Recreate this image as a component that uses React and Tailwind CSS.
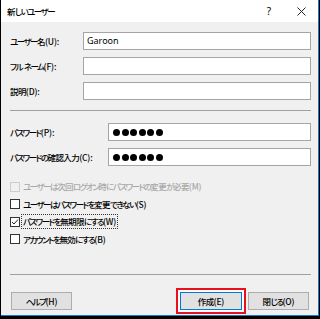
import React from "react";

const font = "font-['Noto_Sans_CJK_JP','Noto_Sans',sans-serif] [font-feature-settings:'palt'] font-medium";

function J({ children }) {
  const parts = String(children)
    .split(/([\x00-\x7f]+|[\u4e00-\u9fff]+)/)
    .filter((p) => p.length);
  return (
    <>
      {parts.map((p, i) => {
        if (/^[\x00-\x7f]+$/.test(p))
          return (
            <span key={i} className="tracking-[-0.15px] whitespace-pre">{p}</span>
          );
        if (/^[\u4e00-\u9fff]+$/.test(p))
          return (
            <span key={i} className="tracking-[-0.6px]">{p}</span>
          );
        return (
          <span key={i} className="tracking-[-1.5px]">{p}</span>
        );
      })}
    </>
  );
}

function Input({ children }) {
  return (
    <div className="h-[18px] flex-1 bg-white border border-[#a5a5a5] flex items-center pl-[3px] text-[9px] text-black font-normal font-['Noto_Sans',sans-serif]">
      {children}
    </div>
  );
}

function Dots() {
  return (
    <div className="flex items-center gap-[1.5px] pl-[1px]">
      {[0, 1, 2, 3, 4, 5].map((i) => (
        <div key={i} className="w-[7px] h-[7px] rounded-full bg-black" />
      ))}
    </div>
  );
}

function Check({ checked, disabled, focus, children }) {
  return (
    <div className="flex items-center h-[17.5px]">
      <div
        className={
          "w-[10px] h-[10px] border flex items-center justify-center " +
          (disabled ? "border-[#cccccc] bg-[#f0f0f0]" : "border-[#333333] bg-white")
        }
      >
        {checked && (
          <svg width="8" height="8" viewBox="0 0 8 8">
            <path d="M1 4 L3 6 L7 1.5" fill="none" stroke="#222" strokeWidth="1" />
          </svg>
        )}
      </div>
      <div
        className={
          "ml-[1px] px-[1px] text-[8.5px] leading-[13px] " +
          (disabled ? "text-[#a8a8a8]" : "text-black") +
          (focus ? " border border-dotted border-[#333]" : " border border-transparent")
        }
      >
        <J>{children}</J>
      </div>
    </div>
  );
}

export default function App() {
  return (
    <div className={"w-[320px] h-[319px] bg-black " + font}>
      <div className="ml-[1px] w-[318px] h-[316px] bg-[#f0f0f0] border-r border-b border-[#1979ca] flex flex-col">
        <div className="h-[22px] bg-white flex items-center pl-[6px] pr-[12px] text-[8.5px] text-black">
          <span><J>新しいユーザー</J></span>
          <span className="ml-auto mr-[26px] text-[10px] font-normal font-['Noto_Sans',sans-serif]">?</span>
          <svg width="9" height="9" viewBox="0 0 9 9">
            <path d="M0.5 0.5 L8.5 8.5 M8.5 0.5 L0.5 8.5" stroke="#222" strokeWidth="1" />
          </svg>
        </div>
        <div className="pl-[9px] pr-[7px] pt-[10px] flex flex-col text-[8.5px] text-black">
          <div className="flex flex-col gap-[7px]">
            <div className="flex items-center">
              <div className="w-[73px]"><J>ユーザー名(U):</J></div>
              <Input>
                <span>Garoon</span>
              </Input>
            </div>
            <div className="flex items-center">
              <div className="w-[73px]"><J>フル ネーム(F):</J></div>
              <Input />
            </div>
            <div className="flex items-center">
              <div className="w-[73px]"><J>説明(D):</J></div>
              <Input />
            </div>
          </div>
          <div className="mt-[10px] h-px bg-[#a0a0a0]" />
          <div className="mt-[12px] flex flex-col gap-[7px]">
            <div className="flex items-center">
              <div className="w-[98px]"><J>パスワード(P):</J></div>
              <Input>
                <Dots />
              </Input>
            </div>
            <div className="flex items-center">
              <div className="w-[98px]"><J>パスワードの確認入力(C):</J></div>
              <Input>
                <Dots />
              </Input>
            </div>
          </div>
          <div className="mt-[12px] flex flex-col">
            <Check disabled>ユーザーは次回ログオン時にパスワードの変更が必要(M)</Check>
            <Check>ユーザーはパスワードを変更できない(S)</Check>
            <Check checked focus>パスワードを無期限にする(W)</Check>
            <Check>アカウントを無効にする(B)</Check>
          </div>
          <div className="mt-[26px] h-px bg-[#a0a0a0]" />
          <div className="mt-[13px] flex items-center pl-[1px] pr-[2px]">
            <button className="w-[61px] h-[18px] bg-[#e1e1e1] border border-[#adadad] text-[8.5px] text-black">
              <J>ヘルプ(H)</J>
            </button>
            <div className="ml-auto border-2 border-[#e8101a] bg-white p-[2px]">
              <button className="block w-[62px] h-[18px] bg-[#e1e1e1] border border-[#0078d7] text-[8.5px] text-black">
                <J>作成(E)</J>
              </button>
            </div>
            <button className="ml-[2px] w-[61px] h-[18px] bg-[#e1e1e1] border border-[#adadad] text-[8.5px] text-black">
              <J>閉じる(O)</J>
            </button>
          </div>
        </div>
      </div>
    </div>
  );
}
